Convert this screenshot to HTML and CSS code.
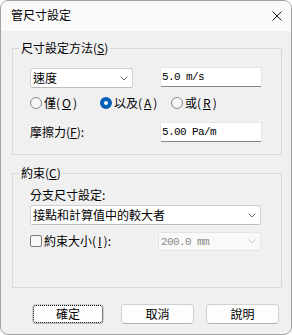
FILE: index.html
```html
<!DOCTYPE html>
<html lang="zh-Hant">
  <head>
    <meta charset="UTF-8" />
    <meta name="viewport" content="width=device-width, initial-scale=1.0" />
    <title>管尺寸設定</title>
    <link rel="stylesheet" href="styles.css">
  </head>
  <body>
    <div class="dialog">
      <div class="titlebar">
        <span class="title">管尺寸設定</span>
        <svg class="close" width="10" height="10" viewBox="0 0 10 10">
          <path d="M0.5 0.5 L9.5 9.5 M9.5 0.5 L0.5 9.5" stroke="#1a1a1a" stroke-width="1" fill="none" />
        </svg>
      </div>

      <div class="group group-method">
        <span class="group-title">尺寸設定方法(<u>S</u>)</span>
        <div class="row">
          <div class="combo combo-short">
            <span>速度</span>
            <svg class="chevron" width="8" height="5" viewBox="0 0 8 5">
              <path d="M0.5 0.5 L4 4 L7.5 0.5" stroke="#707070" fill="none" />
            </svg>
          </div>
          <div class="edit">5.0 m/s</div>
        </div>
        <div class="radios">
          <label class="radio"><span class="dot"></span>僅(<u>O</u>)</label>
          <label class="radio"><span class="dot checked"></span>以及(<u>A</u>)</label>
          <label class="radio"><span class="dot"></span>或(<u>R</u>)</label>
        </div>
        <div class="row row-friction">
          <span class="label">摩擦力(<u>F</u>):</span>
          <div class="edit">5.00 Pa/m</div>
        </div>
      </div>

      <div class="group group-limit">
        <span class="group-title">約束(<u>C</u>)</span>
        <span class="label">分支尺寸設定:</span>
        <div class="combo combo-wide">
          <span>接點和計算值中的較大者</span>
          <svg class="chevron" width="8" height="5" viewBox="0 0 8 5">
            <path d="M0.5 0.5 L4 4 L7.5 0.5" stroke="#707070" fill="none" />
          </svg>
        </div>
        <div class="check-row">
          <label class="check"><span class="box"></span>約束大小(<u>I</u>):</label>
          <div class="combo combo-disabled">
            <span>200.0 mm</span>
            <svg class="chevron" width="8" height="5" viewBox="0 0 8 5">
              <path d="M0.5 0.5 L4 4 L7.5 0.5" stroke="#c8c8c8" fill="none" />
            </svg>
          </div>
        </div>
      </div>

      <div class="buttons">
        <button class="btn btn-default">確定</button>
        <button class="btn">取消</button>
        <button class="btn">說明</button>
      </div>
    </div>
  </body>
</html>
```

FILE: styles.css
```css
body {
  margin: 0;
  font-family: "Noto Sans CJK TC", "Noto Sans", sans-serif;
  font-size: 12px;
  line-height: 16px;
  color: #000;
}

.dialog {
  width: 292px;
  height: 335px;
  box-sizing: border-box;
  border: 1px solid #a3a3a3;
  border-radius: 8px;
  background: #f0f0f0;
  overflow: hidden;
}

.titlebar {
  height: 30px;
  box-sizing: border-box;
  padding: 0 9px 2px 10px;
  background: #fafafa;
  display: flex;
  align-items: center;
  justify-content: space-between;
}
.close {
  margin-top: 2px;
}

.group {
  position: relative;
  width: 270px;
  box-sizing: border-box;
  margin-left: 11px;
  border: 1px solid #d9d9d9;
  padding-left: 17px;
}
.group-title {
  position: absolute;
  top: -9px;
  left: 6px;
  padding: 0 2px;
  background: #f0f0f0;
}
.group-method {
  margin-top: 17px;
  height: 107px;
  padding-top: 18px;
}
.group-limit {
  margin-top: 18px;
  height: 115px;
  padding-top: 13px;
}

.row {
  display: grid;
  grid-template-columns: 103px 102px;
  column-gap: 27px;
  align-items: start;
}
.row-friction {
  margin-top: 11px;
  align-items: center;
}
.label {
  display: block;
}

.combo {
  height: 20px;
  box-sizing: border-box;
  border: 1px solid #d0d0d0;
  border-bottom-color: #bcbcbc;
  border-radius: 3px;
  background: #fff;
  display: flex;
  align-items: center;
  justify-content: space-between;
  padding: 0 4px 0 2px;
}
.combo-short {
  margin-top: 1px;
}
.combo-wide {
  width: 231px;
  margin-top: 2px;
}
.combo-disabled {
  height: 19px;
  margin-top: 1px;
  border-color: #e4e4e4;
  background: #f9f9f9;
  color: #8a8a8a;
  font-family: "Liberation Mono", monospace;
  font-size: 11px;
  letter-spacing: -0.6px;
}

.edit {
  height: 20px;
  box-sizing: border-box;
  border: 1px solid #e6e6e6;
  border-bottom-color: #868686;
  border-radius: 2px;
  background: #fff;
  display: flex;
  align-items: center;
  padding-left: 1px;
  font-family: "Liberation Mono", monospace;
  font-size: 11px;
  letter-spacing: -0.6px;
}

.radios {
  margin-top: 7px;
  display: grid;
  grid-template-columns: 70px 71px auto;
  height: 16px;
}
.radio,
.check {
  display: flex;
  align-items: center;
  gap: 2px;
}
.dot {
  width: 12px;
  height: 12px;
  box-sizing: border-box;
  border: 1px solid #8a8a8a;
  border-radius: 50%;
  background: #f7f7f7;
}
.dot.checked {
  border: 4px solid #005fb8;
  background: #fff;
}

.check-row {
  margin-top: 6px;
  display: grid;
  grid-template-columns: 128px 103px;
  align-items: center;
}
.box {
  width: 12px;
  height: 12px;
  box-sizing: border-box;
  border: 1px solid #7a7a7a;
  border-radius: 2px;
  background: #f7f7f7;
}

.buttons {
  margin-top: 16px;
  padding-left: 31px;
  display: flex;
  gap: 12px;
}
.btn {
  width: 73px;
  height: 20px;
  box-sizing: border-box;
  padding: 0;
  border: 1px solid #d0d0d0;
  border-bottom-color: #b4b4b4;
  border-radius: 4px;
  background: #fdfdfd;
  font-family: inherit;
  font-size: 12px;
  line-height: 16px;
  color: #000;
}
.btn-default {
  width: 72px;
  margin-right: 5px;
  outline: 1px dotted #000;
  outline-offset: -2px;
}
```
